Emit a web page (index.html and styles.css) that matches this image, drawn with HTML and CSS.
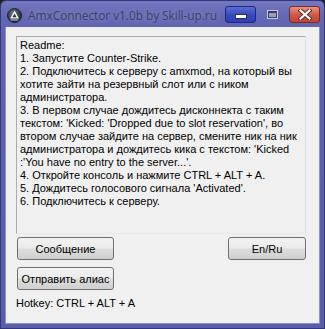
FILE: index.html
```html
<!DOCTYPE html>
<html lang="ru">
<head>
    <meta charset="UTF-8">
    <title>AmxConnector v1.0b by Skill-up.ru</title>
    <link rel="stylesheet" href="styles.css">
</head>
<body>
    <div class="window">
        <div class="titlebar">
            <svg class="app-icon" width="15" height="15" viewBox="0 0 15 15">
                <defs>
                    <radialGradient id="ig" cx="0.4" cy="0.35" r="0.7">
                        <stop offset="0" stop-color="#6a7488"/>
                        <stop offset="1" stop-color="#1c2230"/>
                    </radialGradient>
                </defs>
                <circle cx="7.5" cy="7.5" r="7" fill="url(#ig)" stroke="#11151f" stroke-width="0.8"/>
                <path d="M7.5 2.6 L12 10.6 L3 10.6 Z" fill="#f4f6fa"/>
                <path d="M7.5 5.6 L9.6 9.3 L5.4 9.3 Z" fill="#2a3040"/>
                <rect x="3.6" y="11.4" width="7.8" height="1.1" fill="#aeb6c6"/>
            </svg>
            <span class="title">AmxConnector v1.0b by Skill-up.ru</span>
            <div class="caption-buttons">
                <div class="cap-btn cap-min"><span class="min-dash"></span></div>
                <div class="cap-max"><span></span></div>
                <div class="cap-btn cap-close">
                    <svg width="14" height="11" viewBox="0 0 14 11">
                        <path d="M2.5 1.5 L11.5 9.5 M11.5 1.5 L2.5 9.5" stroke="#5a2a26" stroke-width="4" stroke-linecap="square"/>
                        <path d="M2.5 1.5 L11.5 9.5 M11.5 1.5 L2.5 9.5" stroke="#ffffff" stroke-width="2.2" stroke-linecap="square"/>
                    </svg>
                </div>
            </div>
        </div>
        <div class="client">
            <div class="readme">
                <div>Readme:</div>
                <div>1. Запустите Counter-Strike.</div>
                <div>2. Подключитесь к серверу с amxmod, на который вы</div>
                <div>хотите зайти на резервный слот или с ником</div>
                <div>администратора.</div>
                <div>3. В первом случае дождитесь дисконнекта с таким</div>
                <div>текстом: 'Kicked: 'Dropped due to slot reservation', во</div>
                <div>втором случае зайдите на сервер, смените ник на ник</div>
                <div>администратора и дождитесь кика с текстом: 'Kicked</div>
                <div>:'You have no entry to the server...'.</div>
                <div>4. Откройте консоль и нажмите CTRL + ALT + A.</div>
                <div>5. Дождитесь голосового сигнала 'Activated'.</div>
                <div>6. Подключитесь к серверу.</div>
            </div>
            <div class="button-row">
                <button class="btn btn-wide">Сообщение</button>
                <button class="btn btn-lang">En/Ru</button>
            </div>
            <button class="btn btn-wide btn-alias">Отправить алиас</button>
            <div class="hotkey">Hotkey: CTRL + ALT + A</div>
        </div>
    </div>
</body>
</html>
```

FILE: styles.css
```css
body {
    margin: 0;
    padding: 0;
    background-color: #2b1f1a;
    font-family: 'Liberation Sans', Arial, sans-serif;
    font-size: 11px;
    color: #000;
}
.window {
    width: 325px;
    height: 329px;
    box-sizing: border-box;
    padding: 0 4px 4px 4px;
    display: flex;
    flex-direction: column;
    background: linear-gradient(to bottom, #7478c0 0px, #6468b2 14px, #5d62ad 40px, #585dab 100%);
    border: 1px solid #343778;
    border-radius: 6px 6px 0 0;
}
.titlebar {
    height: 26px;
    display: flex;
    align-items: center;
    flex-shrink: 0;
}
.app-icon {
    margin-left: 2px;
    margin-top: 2px;
}
.title {
    margin-left: 6px;
    margin-top: 2px;
    font-family: 'Open Sans', 'Noto Sans', sans-serif;
    font-size: 12px;
    color: #3e3f5c;
    text-shadow: 0 0 6px rgba(170, 174, 230, 0.9);
    letter-spacing: -0.1px;
}
.caption-buttons {
    margin-left: auto;
    display: flex;
    align-items: center;
    gap: 0;
    margin-top: 1px;
}
.cap-btn {
    height: 15px;
    border-radius: 3px;
    display: flex;
    align-items: center;
    justify-content: center;
}
.cap-min {
    width: 29px;
    border: 1px solid #1d2490;
    background: linear-gradient(to bottom, #5c6cd0, #3848b8 55%, #3040ac);
    align-items: flex-end;
}
.min-dash {
    width: 10px;
    height: 3px;
    background: #fff;
    border: 1px solid #2a2e70;
    margin-bottom: 3px;
}
.cap-max {
    width: 33px;
    height: 15px;
    display: flex;
    align-items: center;
    justify-content: center;
}
.cap-max span {
    width: 7px;
    height: 4px;
    border: 1px solid #3a3c58;
    border-top-width: 2px;
    background: #9a9cc4;
    box-shadow: 0 0 0 1px #c8cae6;
}
.cap-close {
    width: 29px;
    border: 1px solid #7a2a22;
    background: linear-gradient(to bottom, #e89484, #d05a48 50%, #c04432);
}
.client {
    flex: 1;
    background-color: #f0f0f0;
    padding: 9px 0 0 10px;
    display: flex;
    flex-direction: column;
    align-items: flex-start;
    border-left: 1px solid #8a8fd0;
    border-right: 1px solid #8a8fd0;
    border-bottom: 1px solid #8a8fd0;
}
.readme {
    width: 290px;
    height: 198px;
    box-sizing: border-box;
    border: 1px solid #abadb3;
    border-top-color: #abadb3;
    border-right-color: #dbdfe6;
    border-bottom-color: #e3e9ef;
    background-color: #f0f0f0;
    padding: 2px 3px;
    line-height: 13px;
    white-space: nowrap;
    overflow: hidden;
}
.button-row {
    width: 289px;
    margin-top: 3px;
    margin-left: 1px;
    display: flex;
    justify-content: space-between;
}
.btn {
    height: 23px;
    box-sizing: border-box;
    border: 1px solid #707070;
    border-radius: 3px;
    background: linear-gradient(to bottom, #f2f2f2 0%, #ebebeb 48%, #dddddd 52%, #cfcfcf 100%);
    font-family: 'Liberation Sans', Arial, sans-serif;
    font-size: 11px;
    color: #000;
    padding: 0;
}
.btn-wide {
    width: 97px;
}
.btn-lang {
    width: 78px;
}
.btn-alias {
    margin-top: 7px;
    margin-left: 1px;
}
.hotkey {
    margin-top: 7px;
    line-height: 13px;
}
```
